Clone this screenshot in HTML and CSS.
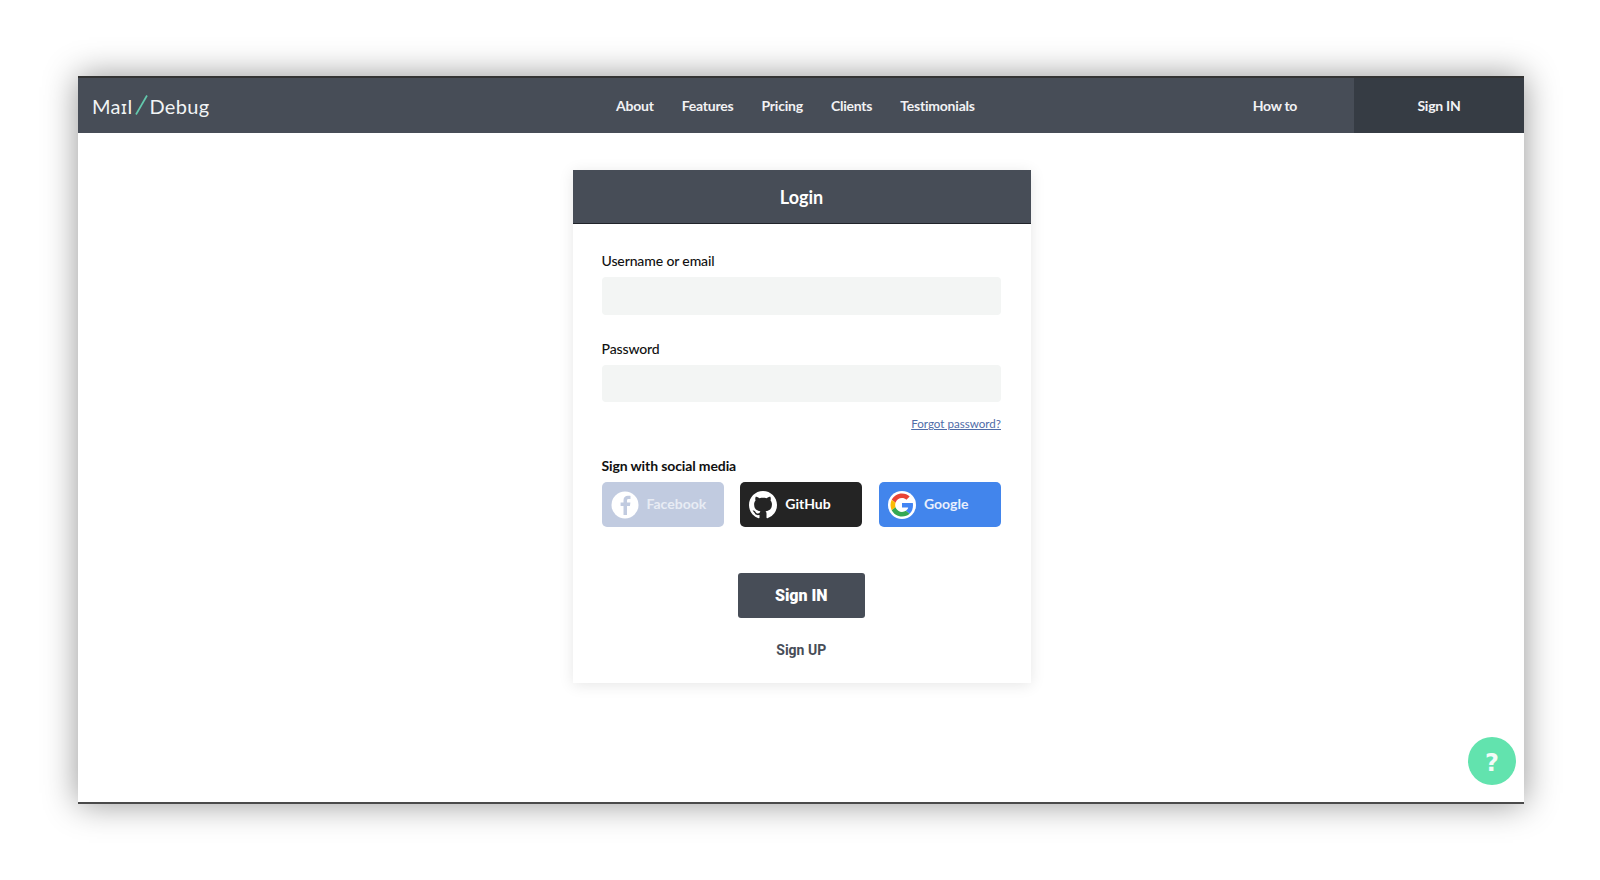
FILE: index.html
```html
<!DOCTYPE html>
<html lang="en">
<head>
<meta charset="utf-8">
<title>MailDebug - Login</title>
<link rel="stylesheet" href="styles.css">
</head>
<body>
<div class="window">
  <header class="nav">
    <a class="logo"><span>Ma<span class="logo-i">ɪ</span>l</span><svg class="slash" width="13" height="20" viewBox="0 0 13 20"><path d="M1 19.500 12 .5" stroke="#63c9ad" stroke-width="1.700" fill="none"/></svg><span>Debug</span></a>
    <nav class="links">
      <a>About</a><a>Features</a><a>Pricing</a><a>Clients</a><a>Testimonials</a>
    </nav>
    <a class="howto">How to</a>
    <a class="signin-tab">Sign IN</a>
  </header>
  <main class="content">
    <section class="card">
      <h1 class="card-title">Login</h1>
      <form class="form">
        <label class="label">Username or email</label>
        <div class="input"></div>
        <label class="label second">Password</label>
        <div class="input short"></div>
        <div class="forgot-row"><a class="forgot">Forgot password?</a></div>
        <div class="label social-label">Sign with social media</div>
        <div class="socials">
          <a class="social facebook">
            <svg class="social-icon" width="28" height="28" viewBox="0 0 28 28"><circle cx="14" cy="14" r="13.500" fill="#fff"/><path d="M16 24v-9h2.900l.5-3.400H16V9.600c0-1 .3-1.700 1.700-1.700h1.800V4.900c-.4 0-1.400-.1-2.600-.1-2.600 0-4.400 1.600-4.400 4.500v2.300H9.600V15h2.900v9z" fill="#c1cbe0"/></svg>
            <span>Facebook</span>
          </a>
          <a class="social github">
            <svg class="social-icon" width="28" height="28" viewBox="0 0 16 16"><path fill="#fff" d="M8 0C3.580 0 0 3.580 0 8c0 3.540 2.290 6.530 5.470 7.590.4.070.55-.17.55-.38 0-.19-.01-.82-.01-1.490-2.010.37-2.530-.49-2.690-.94-.09-.23-.48-.94-.82-1.130-.28-.15-.68-.52-.01-.53.63-.01 1.080.58 1.230.82.720 1.210 1.870.87 2.330.66.070-.52.280-.87.510-1.070-1.780-.2-3.640-.89-3.640-3.950 0-.87.310-1.590.820-2.150-.08-.2-.36-1.020.080-2.120 0 0 .67-.21 2.200.82.640-.18 1.320-.27 2-.27s1.360.09 2 .27c1.530-1.040 2.200-.82 2.200-.82.440 1.100.160 1.920.080 2.120.510.560.820 1.270.820 2.150 0 3.070-1.870 3.750-3.650 3.950.290.250.540.730.540 1.480 0 1.070-.01 1.930-.01 2.200 0 .21.150.46.550.38A8.010 8.010 0 0 0 16 8c0-4.420-3.580-8-8-8z"/></svg>
            <span>GitHub</span>
          </a>
          <a class="social google">
            <svg class="social-icon" width="28" height="28" viewBox="0 0 28 28"><circle cx="14" cy="14" r="14" fill="#fff"/><g transform="translate(2.500 2.500) scale(.479)"><path fill="#EA4335" d="M24 9.500c3.540 0 6.710 1.220 9.210 3.600l6.850-6.850C35.900 2.380 30.470 0 24 0 14.620 0 6.510 5.380 2.560 13.220l7.980 6.190C12.430 13.720 17.740 9.500 24 9.500z"/><path fill="#4285F4" d="M46.980 24.550c0-1.570-.15-3.090-.38-4.550H24v9.020h12.940c-.58 2.960-2.260 5.480-4.780 7.180l7.730 6c4.510-4.180 7.090-10.360 7.090-17.650z"/><path fill="#FBBC05" d="M10.530 28.590c-.48-1.450-.76-2.990-.76-4.590s.27-3.140.76-4.590l-7.980-6.190C.92 16.460 0 20.120 0 24c0 3.880.92 7.540 2.560 10.780l7.970-6.190z"/><path fill="#34A853" d="M24 48c6.480 0 11.930-2.130 15.890-5.810l-7.730-6c-2.150 1.450-4.920 2.300-8.160 2.300-6.260 0-11.570-4.220-13.470-9.910l-7.980 6.190C6.510 42.620 14.620 48 24 48z"/></g></svg>
            <span>Google</span>
          </a>
        </div>
        <button class="submit" type="button">Sign IN</button>
        <a class="signup">Sign UP</a>
      </form>
    </section>
    <a class="help">?</a>
  </main>
</div>
</body>
</html>
```

FILE: styles.css
```css
* { box-sizing: border-box; }
html, body { margin: 0; height: 100%; }
body {
  background: #fff;
  font-family: Lato, "Open Sans", sans-serif;
  padding: 76px 76px 76px 78px;
  overflow: hidden;
}
.window {
  height: 728px;
  display: flex;
  flex-direction: column;
  background: #fff;
  border-top: 2px solid #333;
  border-bottom: 2px solid #4a4a4a;
  box-shadow: 0 0 32px rgba(0, 0, 0, .42);
}
.nav {
  flex: 0 0 55px;
  display: flex;
  align-items: center;
  background: #474d57;
  color: #fff;
}
.logo {
  display: flex;
  align-items: center;
  padding-left: 14px;
  font-size: 20px;
  letter-spacing: .3px;
  color: #f2f4f5;
  width: 538px;
}
.logo-i { font-family: "DejaVu Sans", sans-serif; font-size: 17px; }
.slash { margin: -1px 1px 0 3px; }
.links {
  display: flex;
  gap: 28px;
  font-size: 14px;
  font-weight: 700;
  letter-spacing: -.22px;
  color: #f2f2f4;
}
.howto {
  margin-left: auto;
  font-size: 14px;
  font-weight: 700;
  letter-spacing: -.3px;
  color: #f2f2f4;
  padding-right: 57px;
}
.signin-tab {
  flex: 0 0 170px;
  align-self: stretch;
  display: flex;
  align-items: center;
  justify-content: center;
  background: #363c44;
  font-size: 14px;
  font-weight: 700;
  letter-spacing: -.25px;
  color: #f2f2f4;
}
.content {
  flex: 1;
  position: relative;
  display: flex;
  justify-content: center;
  padding-top: 37px;
}
.card {
  width: 458px;
  height: 513px;
  margin-left: 1px;
  background: #fff;
  box-shadow: 0 2px 14px rgba(0, 0, 0, .1);
}
.card-title {
  margin: 0;
  height: 54px;
  display: flex;
  align-items: center;
  justify-content: center;
  background: #474d57;
  border-bottom: 1px solid #20242a;
  color: #fff;
  font-size: 18px;
  font-weight: 700;
}
.form {
  display: flex;
  flex-direction: column;
  padding: 28px 29.500px 0 29px;
}
.label {
  font-size: 14px;
  line-height: 17px;
  font-weight: 500;
  letter-spacing: -.12px;
  color: #111;
  margin-bottom: 8px;
}
.label.second { margin-top: 25px; }
.input {
  height: 38px;
  background: #f3f5f4;
  border-radius: 4px;
}
.input.short { height: 37px; }
.forgot-row {
  display: flex;
  justify-content: flex-end;
  margin-top: 14px;
}
.forgot {
  font-size: 11.600px;
  line-height: 15px;
  color: #4f6ca8;
  text-decoration: underline;
}
.social-label { margin-top: 26px; font-weight: 700; }
.socials {
  display: flex;
  justify-content: space-between;
}
.social {
  width: 122px;
  height: 45px;
  border-radius: 5px;
  display: flex;
  align-items: center;
  gap: 8px;
  padding-left: 10px;
  padding-bottom: 2px;
  font-size: 14px;
  font-weight: 700;
  color: #fff;
}
.social-icon { flex: none; margin-bottom: -2px; margin-left: -1px; }
.facebook { background: #c1cbe0; color: #e8ecf4; }
.github { background: #242424; }
.google { background: #4285ec; color: #e8effc; }
.submit {
  align-self: center;
  width: 127px;
  height: 45px;
  margin-top: 46px;
  border: 0;
  border-radius: 3px;
  background: #474d57;
  color: #fff;
  font-family: Roboto, sans-serif;
  font-size: 16px;
  font-weight: 900;
}
.signup {
  align-self: center;
  margin-top: 24px;
  font-family: Roboto, sans-serif;
  font-size: 14px;
  font-weight: 700;
  color: #474d57;
}
.help {
  position: absolute;
  right: 8px;
  bottom: 17px;
  width: 48px;
  height: 48px;
  padding-top: 3px;
  border-radius: 50%;
  background: #62e3ae;
  color: #f4fbf8;
  display: flex;
  align-items: center;
  justify-content: center;
  font-family: "DejaVu Sans", sans-serif;
  font-size: 24px;
  font-weight: 700;
}
```
